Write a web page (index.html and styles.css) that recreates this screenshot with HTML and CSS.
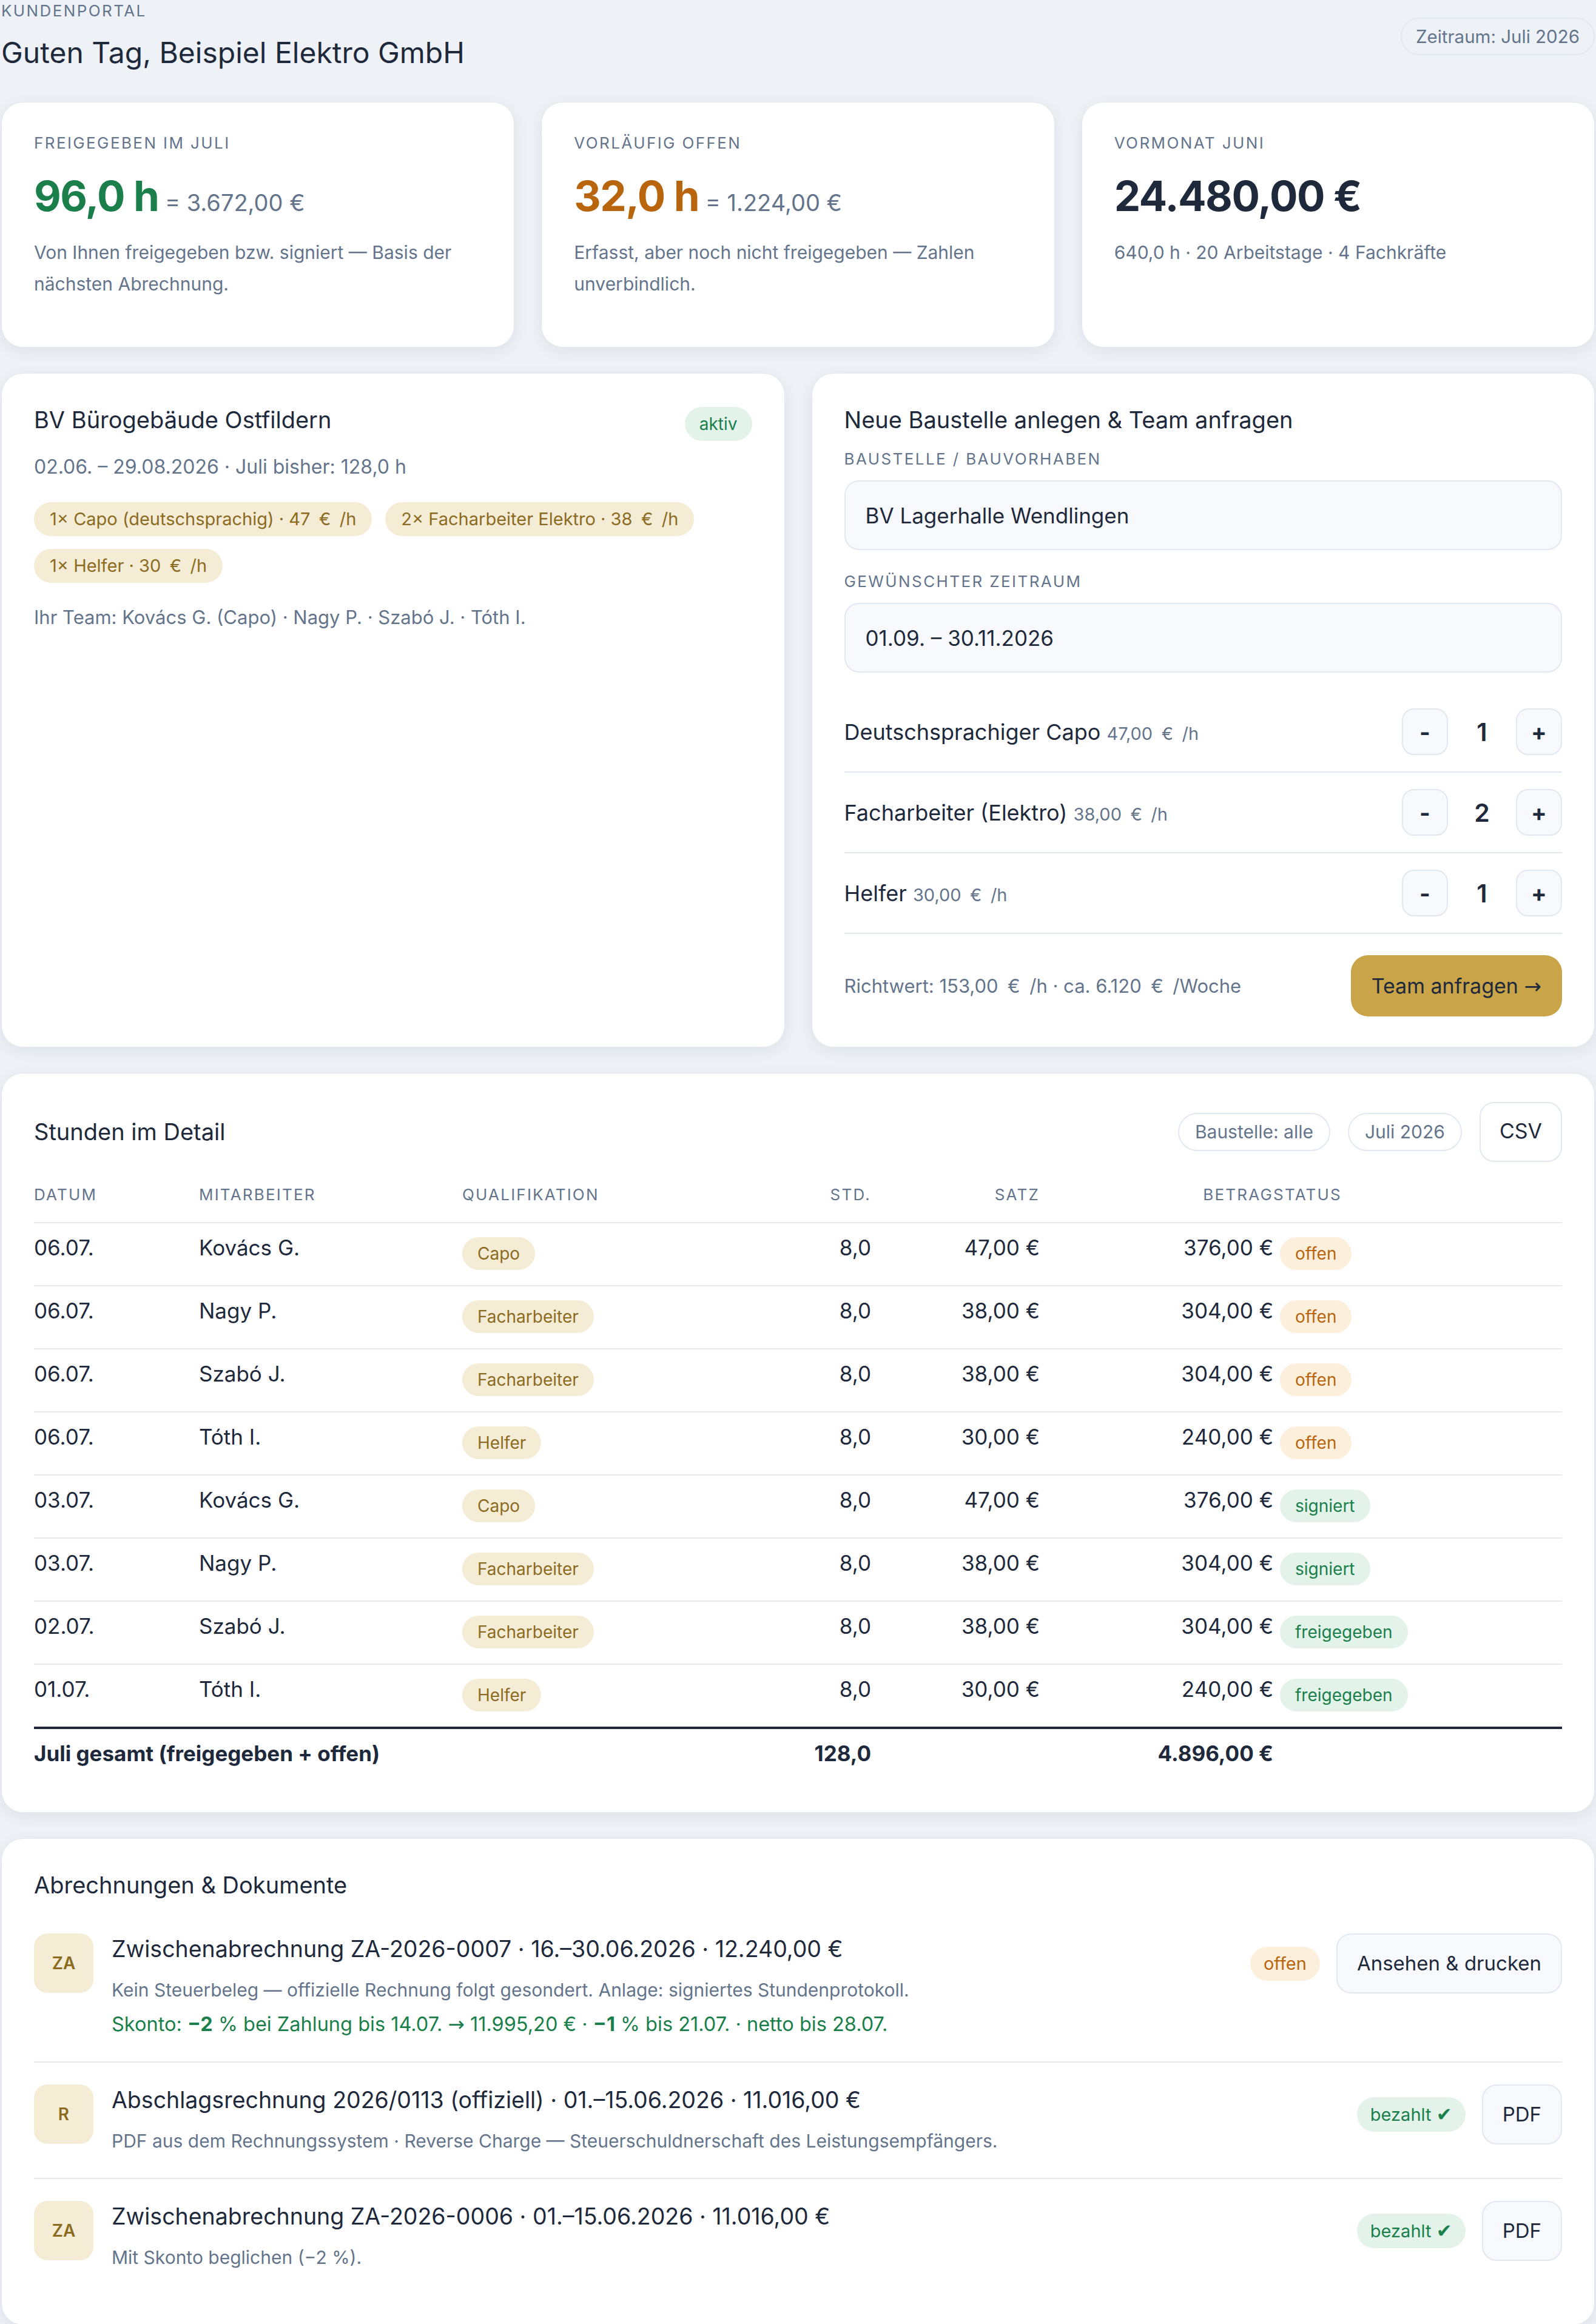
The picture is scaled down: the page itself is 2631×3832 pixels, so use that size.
FILE: index.html
```html
<!DOCTYPE html>
<html lang="de">
<head>
  <meta charset="UTF-8">
  <meta name="viewport" content="width=device-width, initial-scale=1.0">
  <title>Kundenportal</title>
  <link rel="stylesheet" href="styles.css">
</head>
<body>
  <div class="page">
    <header class="top">
      <div>
        <div class="eyebrow">Kundenportal</div>
        <h1 class="greeting">Guten Tag, Beispiel Elektro GmbH</h1>
      </div>
      <span class="period">Zeitraum: Juli 2026</span>
    </header>

    <section class="kpis">
      <div class="card kpi">
        <div class="label">Freigegeben im Juli</div>
        <div class="kpi-value"><span class="big green">96,0 h</span> <span class="eq">= 3.672,00 €</span></div>
        <p class="kpi-note">Von Ihnen freigegeben bzw. signiert — Basis der nächsten Abrechnung.</p>
      </div>
      <div class="card kpi">
        <div class="label">Vorläufig offen</div>
        <div class="kpi-value"><span class="big orange">32,0 h</span> <span class="eq">= 1.224,00 €</span></div>
        <p class="kpi-note">Erfasst, aber noch nicht freigegeben — Zahlen unverbindlich.</p>
      </div>
      <div class="card kpi">
        <div class="label">Vormonat Juni</div>
        <div class="kpi-value"><span class="big">24.480,00 €</span></div>
        <p class="kpi-note">640,0 h · 20 Arbeitstage · 4 Fachkräfte</p>
      </div>
    </section>

    <section class="split">
      <div class="card site">
        <div class="site-head">
          <h2 class="card-title">BV Bürogebäude Ostfildern</h2>
          <span class="badge green">aktiv</span>
        </div>
        <p class="site-meta">02.06. – 29.08.2026 · Juli bisher: 128,0 h</p>
        <div class="tags">
          <span class="badge gold">1× Capo (deutschsprachig) · 47&ensp;€&ensp;/h</span>
          <span class="badge gold">2× Facharbeiter Elektro · 38&ensp;€&ensp;/h</span>
          <span class="badge gold">1× Helfer · 30&ensp;€&ensp;/h</span>
        </div>
        <p class="team">Ihr Team: Kovács G. (Capo) · Nagy P. · Szabó J. · Tóth I.</p>
      </div>

      <form class="card request">
        <h2 class="card-title">Neue Baustelle anlegen &amp; Team anfragen</h2>
        <label class="label field-label" for="site">Baustelle / Bauvorhaben</label>
        <input class="field" id="site" type="text" value="BV Lagerhalle Wendlingen">
        <label class="label field-label second" for="range">Gewünschter Zeitraum</label>
        <input class="field" id="range" type="text" value="01.09. – 30.11.2026">

        <div class="roles">
          <div class="role">
            <span class="role-name">Deutschsprachiger Capo <span class="rate">47,00&ensp;€&ensp;/h</span></span>
            <div class="stepper"><button type="button" class="step">-</button><span class="count">1</span><button type="button" class="step">+</button></div>
          </div>
          <div class="role">
            <span class="role-name">Facharbeiter (Elektro) <span class="rate">38,00&ensp;€&ensp;/h</span></span>
            <div class="stepper"><button type="button" class="step">-</button><span class="count">2</span><button type="button" class="step">+</button></div>
          </div>
          <div class="role">
            <span class="role-name">Helfer <span class="rate">30,00&ensp;€&ensp;/h</span></span>
            <div class="stepper"><button type="button" class="step">-</button><span class="count">1</span><button type="button" class="step">+</button></div>
          </div>
        </div>

        <div class="request-foot">
          <span class="hint">Richtwert: 153,00&ensp;€&ensp;/h · ca. 6.120&ensp;€&ensp;/Woche</span>
          <button type="button" class="primary">Team anfragen <span class="arrow">→</span></button>
        </div>
      </form>
    </section>

    <section class="card hours">
      <div class="hours-head">
        <h2 class="card-title">Stunden im Detail</h2>
        <div class="filters">
          <span class="chip">Baustelle: alle</span>
          <span class="chip">Juli 2026</span>
          <button type="button" class="btn white">CSV</button>
        </div>
      </div>
      <table>
        <colgroup>
          <col style="width: 272px">
          <col style="width: 434px">
          <col style="width: 474px">
          <col style="width: 200px">
          <col style="width: 278px">
          <col style="width: 385px">
          <col>
        </colgroup>
        <thead>
          <tr>
            <th>Datum</th>
            <th>Mitarbeiter</th>
            <th>Qualifikation</th>
            <th class="num">Std.</th>
            <th class="num">Satz</th>
            <th class="num">Betrag</th>
            <th>Status</th>
          </tr>
        </thead>
        <tbody>
          <tr><td>06.07.</td><td>Kovács G.</td><td><span class="badge gold">Capo</span></td><td class="num">8,0</td><td class="num">47,00 €</td><td class="num">376,00 €</td><td><span class="badge orange status">offen</span></td></tr>
          <tr><td>06.07.</td><td>Nagy P.</td><td><span class="badge gold">Facharbeiter</span></td><td class="num">8,0</td><td class="num">38,00 €</td><td class="num">304,00 €</td><td><span class="badge orange status">offen</span></td></tr>
          <tr><td>06.07.</td><td>Szabó J.</td><td><span class="badge gold">Facharbeiter</span></td><td class="num">8,0</td><td class="num">38,00 €</td><td class="num">304,00 €</td><td><span class="badge orange status">offen</span></td></tr>
          <tr><td>06.07.</td><td>Tóth I.</td><td><span class="badge gold">Helfer</span></td><td class="num">8,0</td><td class="num">30,00 €</td><td class="num">240,00 €</td><td><span class="badge orange status">offen</span></td></tr>
          <tr><td>03.07.</td><td>Kovács G.</td><td><span class="badge gold">Capo</span></td><td class="num">8,0</td><td class="num">47,00 €</td><td class="num">376,00 €</td><td><span class="badge green status">signiert</span></td></tr>
          <tr><td>03.07.</td><td>Nagy P.</td><td><span class="badge gold">Facharbeiter</span></td><td class="num">8,0</td><td class="num">38,00 €</td><td class="num">304,00 €</td><td><span class="badge green status">signiert</span></td></tr>
          <tr><td>02.07.</td><td>Szabó J.</td><td><span class="badge gold">Facharbeiter</span></td><td class="num">8,0</td><td class="num">38,00 €</td><td class="num">304,00 €</td><td><span class="badge green status">freigegeben</span></td></tr>
          <tr><td>01.07.</td><td>Tóth I.</td><td><span class="badge gold">Helfer</span></td><td class="num">8,0</td><td class="num">30,00 €</td><td class="num">240,00 €</td><td><span class="badge green status">freigegeben</span></td></tr>
        </tbody>
        <tfoot>
          <tr class="total"><td colspan="3">Juli gesamt (freigegeben + offen)</td><td class="num">128,0</td><td></td><td class="num">4.896,00 €</td><td></td></tr>
        </tfoot>
      </table>
    </section>

    <section class="card docs">
      <h2 class="card-title">Abrechnungen &amp; Dokumente</h2>
      <div class="doc">
        <div class="doc-icon">ZA</div>
        <div class="doc-body">
          <div class="doc-title">Zwischenabrechnung ZA-2026-0007 · 16.–30.06.2026 · 12.240,00 €</div>
          <p class="doc-desc">Kein Steuerbeleg — offizielle Rechnung folgt gesondert. Anlage: signiertes Stundenprotokoll.</p>
          <p class="doc-desc skonto">Skonto: <b>−2</b> % bei Zahlung bis 14.07. <span class="arrow">→</span> 11.995,20 € · <b>−1</b> % bis 21.07. · netto bis 28.07.</p>
        </div>
        <div class="doc-actions">
          <span class="badge orange">offen</span>
          <button type="button" class="btn">Ansehen &amp; drucken</button>
        </div>
      </div>
      <div class="doc">
        <div class="doc-icon">R</div>
        <div class="doc-body">
          <div class="doc-title">Abschlagsrechnung 2026/0113 (offiziell) · 01.–15.06.2026 · 11.016,00 €</div>
          <p class="doc-desc">PDF aus dem Rechnungssystem · Reverse Charge — Steuerschuldnerschaft des Leistungsempfängers.</p>
        </div>
        <div class="doc-actions">
          <span class="badge green">bezahlt <span class="check">✔</span></span>
          <button type="button" class="btn">PDF</button>
        </div>
      </div>
      <div class="doc">
        <div class="doc-icon">ZA</div>
        <div class="doc-body">
          <div class="doc-title">Zwischenabrechnung ZA-2026-0006 · 01.–15.06.2026 · 11.016,00 €</div>
          <p class="doc-desc">Mit Skonto beglichen (−2 %).</p>
        </div>
        <div class="doc-actions">
          <span class="badge green">bezahlt <span class="check">✔</span></span>
          <button type="button" class="btn">PDF</button>
        </div>
      </div>
    </section>
  </div>
</body>
</html>
```

FILE: styles.css
```css
* {
  margin: 0;
  padding: 0;
  box-sizing: border-box;
}

body {
  background: #eef2f7;
  font-family: Inter, "Noto Sans", sans-serif;
  color: #1e293b;
}

.page {
  width: 2631px;
  padding: 0 2px 4px;
}

/* Header */
.top {
  display: flex;
  justify-content: space-between;
  align-items: center;
  margin-bottom: 49px;
}

.eyebrow {
  padding-top: 2px;
  font-size: 26px;
  line-height: 31px;
  letter-spacing: 2.4px;
  text-transform: uppercase;
  color: #64748b;
}

.greeting {
  margin-top: 21px;
  font-size: 48px;
  line-height: 65px;
  font-weight: 400;
}

.period {
  font-size: 29.5px;
  line-height: 38px;
  color: #64748b;
  border: 2px solid #e2e8f0;
  border-radius: 999px;
  padding: 10px 23px;
}

/* Cards */
.card {
  background: #fff;
  border: 1px solid #e3e8ef;
  border-radius: 36px;
  box-shadow: 0 6px 26px rgba(15, 23, 42, 0.07);
  padding: 50px 53px;
}

.card-title {
  font-size: 38px;
  line-height: 53px;
  font-weight: 400;
}

.label {
  font-size: 26px;
  line-height: 39px;
  letter-spacing: 2.4px;
  text-transform: uppercase;
  color: #64748b;
}

.badge {
  display: inline-block;
  font-size: 28px;
  line-height: 34px;
  padding: 11px 24px;
  border-radius: 999px;
  white-space: nowrap;
}

.badge.green {
  background: #e3f3ea;
  color: #1a7f4b;
}

.badge.gold {
  background: #f5ecd6;
  color: #8b6b1f;
}

.badge.orange {
  background: #fcefdb;
  color: #b8650e;
}

.arrow {
  font-family: "DejaVu Sans", sans-serif;
  font-weight: 400;
}

.check {
  font-family: "DejaVu Sans", sans-serif;
  font-size: 31px;
}

/* KPI row */
.kpis {
  display: grid;
  grid-template-columns: repeat(3, 1fr);
  gap: 44px;
  margin-bottom: 42px;
}

.kpi {
  min-height: 405px;
  padding-top: 47px;
}

.kpi-value {
  margin-top: 26px;
  line-height: 84px;
}

.big {
  font-size: 69px;
  font-weight: 700;
  letter-spacing: -1.5px;
}

.big.green {
  color: #1a7f4b;
}

.big.orange {
  color: #b8650e;
}

.eq {
  margin-left: 6px;
  font-size: 38px;
  color: #64748b;
}

.kpi-note {
  margin-top: 6px;
  font-size: 30px;
  line-height: 52px;
  color: #64748b;
}

/* Site + request */
.split {
  display: grid;
  grid-template-columns: 1fr 1fr;
  gap: 44px;
  margin-bottom: 42px;
}

.site-head {
  display: flex;
  justify-content: space-between;
  align-items: flex-start;
}

.site-head .badge {
  margin-top: 5px;
}

.site-meta,
.team {
  font-size: 31px;
  line-height: 48px;
  color: #64748b;
}

.site-meta {
  margin-top: 19px;
  font-size: 32px;
}

.tags {
  display: flex;
  flex-wrap: wrap;
  gap: 21px 22px;
  margin-top: 34px;
}

.tags .badge {
  font-size: 29px;
  padding: 11px 26px;
}

.team {
  margin-top: 33px;
}

.field-label {
  display: block;
  margin-top: 18px;
}

.field-label.second {
  margin-top: 32px;
}

.field {
  display: block;
  width: 100%;
  height: 115px;
  margin-top: 16px;
  padding: 0 33px;
  font-family: inherit;
  font-size: 35px;
  color: #1e293b;
  background: #f7f9fc;
  border: 2px solid #e2e8f0;
  border-radius: 24px;
}

.roles {
  margin-top: 32px;
}

.role {
  display: flex;
  justify-content: space-between;
  align-items: center;
  padding: 27px 0;
  border-bottom: 2px solid #e2e8f0;
}

.role-name {
  font-size: 36px;
}

.rate {
  font-size: 29px;
  color: #64748b;
}

.stepper {
  display: flex;
  align-items: center;
}

.step {
  width: 76px;
  height: 77px;
  font-family: inherit;
  font-size: 38px;
  font-weight: 700;
  color: #1e293b;
  background: #f7f9fc;
  border: 2px solid #e2e8f0;
  border-radius: 20px;
}

.count {
  width: 112px;
  text-align: center;
  font-size: 41px;
  font-weight: 600;
}

.request-foot {
  display: flex;
  justify-content: space-between;
  align-items: center;
  margin-top: 35px;
}

.hint {
  font-size: 31px;
  color: #64748b;
}

.primary {
  height: 101px;
  padding: 0 34px;
  font-family: inherit;
  font-size: 34px;
  color: #1e293b;
  background: #c9a448;
  border: none;
  border-radius: 28px;
}

.btn {
  font-family: inherit;
  font-size: 33px;
  line-height: 41px;
  color: #1e293b;
  background: #f7f9fc;
  border: 2px solid #e2e8f0;
  border-radius: 24px;
  padding: 27px 33px;
}

.btn.white {
  background: #fff;
  font-size: 34px;
  padding: 25px 31px 29px;
}

/* Hours table */
.hours {
  padding-top: 47px;
  padding-bottom: 48px;
  margin-bottom: 42px;
}

.hours-head {
  display: flex;
  justify-content: space-between;
  align-items: center;
  margin-bottom: 34px;
}

.filters {
  display: flex;
  align-items: center;
  gap: 29px;
}

.chip {
  font-size: 30px;
  line-height: 37px;
  color: #64748b;
  border: 2px solid #e2e8f0;
  border-radius: 999px;
  padding: 11px 26px;
}

table {
  width: 100%;
  border-collapse: collapse;
  table-layout: fixed;
}

th {
  padding: 0 0 26px;
  font-size: 26px;
  line-height: 39px;
  font-weight: 400;
  letter-spacing: 2.2px;
  text-transform: uppercase;
  text-align: left;
  color: #64748b;
  border-bottom: 2px solid #e2e8f0;
}

td {
  padding: 14px 0 25px;
  font-size: 35px;
  line-height: 52px;
  vertical-align: top;
  border-bottom: 2px solid #e2e8f0;
}

th.num,
td.num {
  text-align: right;
}

td .badge {
  display: block;
  width: fit-content;
  margin-top: 9px;
  padding: 10px 25px;
}

td .status {
  margin-left: 11px;
}

.total td {
  font-weight: 700;
  border-top: 4px solid #1e293b;
  border-bottom: none;
  padding-bottom: 23px;
}

/* Documents */
.docs .card-title {
  margin-bottom: 17px;
}

.doc {
  display: flex;
  align-items: flex-start;
  gap: 30px;
  padding: 36px 0 37px;
  border-bottom: 2px solid #e2e8f0;
}

.doc:last-child {
  border-bottom: none;
}

.doc-icon {
  flex: none;
  width: 98px;
  height: 98px;
  display: flex;
  align-items: center;
  justify-content: center;
  font-size: 28px;
  font-weight: 600;
  color: #8b6b1f;
  background: #f5ecd6;
  border-radius: 22px;
}

.doc-body {
  flex: 1;
}

.doc-title {
  font-size: 37.5px;
  line-height: 52px;
}

.doc-desc {
  margin-top: 17px;
  font-size: 30px;
  line-height: 48px;
  color: #64748b;
}

.doc-desc.skonto {
  margin-top: 9px;
  font-size: 32.5px;
  color: #1a7f4b;
}

.doc-actions {
  display: flex;
  align-items: center;
  gap: 27px;
}

.doc-actions .badge {
  font-size: 29px;
  padding: 11px 22px;
}

.doc-actions .btn {
  padding: 27px 32px;
}
```
